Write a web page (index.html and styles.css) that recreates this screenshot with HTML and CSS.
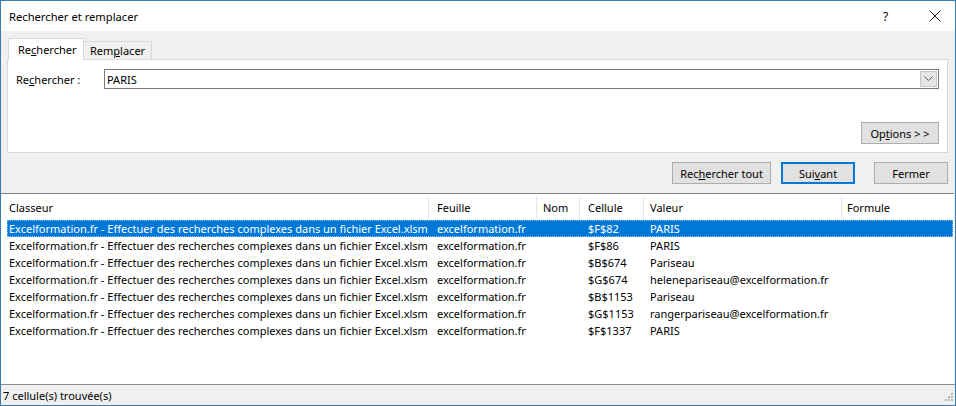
FILE: index.html
```html
<!DOCTYPE html>
<html lang="fr">
<head>
<meta charset="utf-8">
<title>Rechercher et remplacer</title>
<link rel="stylesheet" href="styles.css">
</head>
<body>
<div class="window">
  <div class="titlebar">
    <span class="title">Rechercher et remplacer</span>
    <span class="help">?</span>
    <svg class="close" width="12" height="12" viewBox="0 0 12 12"><path d="M0.5 0.5 L11.5 11.5 M11.5 0.5 L0.5 11.5" stroke="#1a1a1a" stroke-width="1" fill="none"/></svg>
  </div>
  <div class="body">
    <div class="tabs">
      <div class="tab active">Re<u>c</u>hercher</div>
      <div class="tab">Rem<u>p</u>lacer</div>
    </div>
    <div class="panel">
      <div class="field-row">
        <label class="label">Re<u>c</u>hercher :</label>
        <div class="combo">
          <span class="combo-text">PARIS</span>
          <span class="combo-btn"><svg width="9" height="6" viewBox="0 0 9 6"><path d="M0.5 0.5 L4.5 4.5 L8.5 0.5" stroke="#606060" stroke-width="1" fill="none"/></svg></span>
        </div>
      </div>
      <div class="options-row">
        <button class="btn btn-options">Op<u>t</u>ions &gt; &gt;</button>
      </div>
    </div>
    <div class="actions">
      <button class="btn btn-all">Rec<u>h</u>ercher tout</button>
      <button class="btn btn-next">Sui<u>v</u>ant</button>
      <button class="btn btn-close">Fermer</button>
    </div>
  </div>
  <div class="results">
    <div class="thead">
      <div class="th c1">Classeur</div>
      <div class="th c2">Feuille</div>
      <div class="th c3">Nom</div>
      <div class="th c4">Cellule</div>
      <div class="th c5">Valeur</div>
      <div class="th c6">Formule</div>
    </div>
    <div class="tbody">
      <div class="tr selected"><div class="td c1">Excelformation.fr - Effectuer des recherches complexes dans un fichier Excel.xlsm</div><div class="td c2">excelformation.fr</div><div class="td c3"></div><div class="td c4">$F$82</div><div class="td c5">PARIS</div><div class="td c6"></div></div>
      <div class="tr"><div class="td c1">Excelformation.fr - Effectuer des recherches complexes dans un fichier Excel.xlsm</div><div class="td c2">excelformation.fr</div><div class="td c3"></div><div class="td c4">$F$86</div><div class="td c5">PARIS</div><div class="td c6"></div></div>
      <div class="tr"><div class="td c1">Excelformation.fr - Effectuer des recherches complexes dans un fichier Excel.xlsm</div><div class="td c2">excelformation.fr</div><div class="td c3"></div><div class="td c4">$B$674</div><div class="td c5">Pariseau</div><div class="td c6"></div></div>
      <div class="tr"><div class="td c1">Excelformation.fr - Effectuer des recherches complexes dans un fichier Excel.xlsm</div><div class="td c2">excelformation.fr</div><div class="td c3"></div><div class="td c4">$G$674</div><div class="td c5">helenepariseau@excelformation.fr</div><div class="td c6"></div></div>
      <div class="tr"><div class="td c1">Excelformation.fr - Effectuer des recherches complexes dans un fichier Excel.xlsm</div><div class="td c2">excelformation.fr</div><div class="td c3"></div><div class="td c4">$B$1153</div><div class="td c5">Pariseau</div><div class="td c6"></div></div>
      <div class="tr"><div class="td c1">Excelformation.fr - Effectuer des recherches complexes dans un fichier Excel.xlsm</div><div class="td c2">excelformation.fr</div><div class="td c3"></div><div class="td c4">$G$1153</div><div class="td c5">rangerpariseau@excelformation.fr</div><div class="td c6"></div></div>
      <div class="tr"><div class="td c1">Excelformation.fr - Effectuer des recherches complexes dans un fichier Excel.xlsm</div><div class="td c2">excelformation.fr</div><div class="td c3"></div><div class="td c4">$F$1337</div><div class="td c5">PARIS</div><div class="td c6"></div></div>
    </div>
  </div>
  <div class="status">
    <span>7 cellule(s) trouvée(s)</span>
    <svg class="grip" width="11" height="11" viewBox="0 0 11 11" fill="#b8b8b8">
      <rect x="8" y="0" width="2" height="2"/>
      <rect x="5" y="3" width="2" height="2"/><rect x="8" y="3" width="2" height="2"/>
      <rect x="2" y="6" width="2" height="2"/><rect x="5" y="6" width="2" height="2"/><rect x="8" y="6" width="2" height="2"/>
    </svg>
  </div>
</div>
</body>
</html>
```
FILE: styles.css
```css
* { box-sizing: border-box; }
html, body { margin: 0; padding: 0; }
body {
  font-family: "Noto Sans", "Open Sans", sans-serif;
  font-size: 11px;
  color: #000;
  background: #fff;
}
u { text-decoration: underline; text-underline-offset: 1px; }

.window {
  width: 956px;
  height: 406px;
  border: 1px solid #3b7bb0;
  display: flex;
  flex-direction: column;
  background: #f0f0f0;
  overflow: hidden;
}

.titlebar {
  height: 30px;
  flex: none;
  background: #fff;
  display: flex;
  align-items: center;
  padding-left: 8px;
}
.title { font-size: 11.2px; flex: 1; color: #000; }
.help { width: 20px; margin-right: 26px; font-size: 12px; }
.close { margin-right: 14px; }

.body {
  padding: 7px 7px 0 6px;
  flex: none;
  height: 162px;
}
.tabs { display: flex; align-items: flex-end; height: 21px; padding-left: 1px; }
.tab {
  height: 18px;
  padding: 0 6px;
  border: 1px solid #d9d9d9;
  border-bottom: none;
  background: #f0f0f0;
  line-height: 17px;
  margin-left: -1px;
}
.tab.active {
  height: 22px;
  background: #fff;
  width: 76px;
  padding: 0 0 0 9px;
  line-height: 21px;
  position: relative;
  top: 1px;
  z-index: 1;
  margin-left: 0;
}
.panel {
  background: #fff;
  border: 1px solid #d9d9d9;
  height: 94px;
  padding: 9px 8px 0 8px;
}
.field-row { display: flex; align-items: center; height: 20px; }
.label { width: 88px; }
.combo {
  flex: 1;
  height: 20px;
  border: 1px solid #7a7a7a;
  display: flex;
  align-items: center;
  padding: 1px;
}
.combo-text { flex: 1; padding-left: 1px; }
.combo-btn {
  width: 17px;
  height: 16px;
  background: #e5e5e5;
  border: 1px solid #c6c6c6;
  display: flex;
  align-items: center;
  justify-content: center;
}
.options-row { display: flex; justify-content: flex-end; margin-top: 33px; }

.btn {
  font-family: inherit;
  font-size: 11px;
  height: 22px;
  background: #e1e1e1;
  border: 1px solid #adadad;
  color: #000;
  padding: 0;
}
.btn-options { width: 78px; }
.actions {
  display: flex;
  justify-content: flex-end;
  margin-top: 9px;
}
.btn-all { width: 99px; }
.btn-next { width: 74px; margin-left: 10px; border: 2px solid #0078d7; }
.btn-close { width: 74px; margin-left: 19px; }

.results {
  flex: 1;
  background: #fff;
  border-top: 1px solid #828282;
  margin-right: 1px;
  padding-top: 3px;
}
.thead, .tr {
  display: grid;
  grid-template-columns: 428px 108px 43px 64px 198px 1fr;
}
.thead { height: 21px; }
.th {
  line-height: 21px;
  padding-left: 8px;
  border-right: 1px solid #e5e5e5;
  white-space: nowrap;
}
.th.c3 { padding-left: 6px; }
.th.c5 { padding-left: 6px; }
.th.c6 { padding-left: 5px; border-right: none; }
.tbody { padding-top: 2px; }
.tr {
  height: 17px;
  line-height: 17px;
  grid-template-columns: 422px 108px 43px 64px 198px 1fr;
  margin-left: 6px;
  margin-right: 1px;
}
.td { padding-left: 8px; white-space: nowrap; overflow: hidden; }
.td.c1 { padding-left: 2px; }
.td.c3 { padding-left: 6px; }
.td.c5 { padding-left: 6px; }
.tr.selected {
  background: #0078d7;
  color: #fff;
  outline: 1px dotted #9ac4ea;
  outline-offset: -1px;
}

.status {
  height: 21px;
  flex: none;
  border-top: 1px solid #8c8c8c;
  display: flex;
  align-items: center;
  justify-content: space-between;
  padding-left: 2px;
  padding-right: 1px;
}
.grip { align-self: flex-end; margin-bottom: 1px; }
```
